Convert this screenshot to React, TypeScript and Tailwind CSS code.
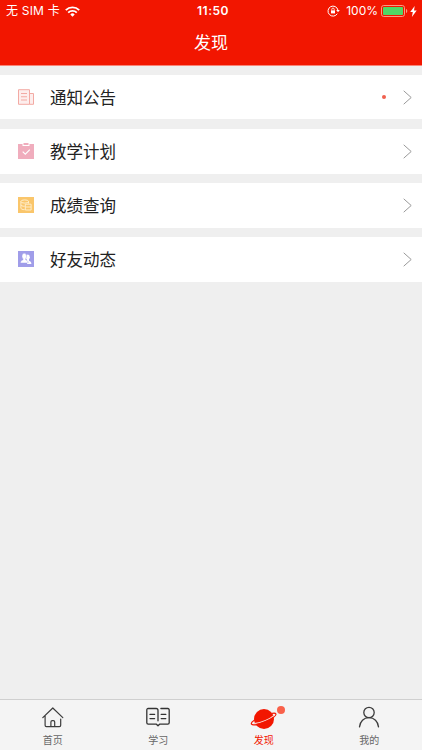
import type { ReactNode } from "react";

const rows: { label: string; icon: ReactNode; unread?: boolean }[] = [
  { label: "通知公告", icon: <NoticeIcon />, unread: true },
  { label: "教学计划", icon: <PlanIcon /> },
  { label: "成绩查询", icon: <ScoreIcon /> },
  { label: "好友动态", icon: <FriendsIcon /> },
];

const tabs: { label: string; icon: ReactNode; active?: boolean }[] = [
  { label: "首页", icon: <HomeIcon /> },
  { label: "学习", icon: <BookIcon /> },
  { label: "发现", icon: <PlanetIcon />, active: true },
  { label: "我的", icon: <UserIcon /> },
];

function NoticeIcon() {
  return (
    <svg width="16" height="16" viewBox="0 0 16 16" fill="none" stroke="#f3aaa4">
      <path d="M.5.7h11v14.6H.5zM11.5 4.5h4v10.8h-4" fill="#fdeeed" />
      <path d="M3 4.5h6M3 7.7h6M3 11h6" strokeWidth="1.1" />
    </svg>
  );
}

function PlanIcon() {
  return (
    <svg width="16" height="16" viewBox="0 0 16 16">
      <path d="M0 1h4.5v2h7V1H16v15H0z" fill="#f0adbd" />
      <path d="M5.5 0h5v2h-5z" fill="#f0adbd" />
      <path d="m4.7 8.6 2.6 2.6 4.5-4.5" fill="none" stroke="#fff" strokeWidth="1.2" />
    </svg>
  );
}

function ScoreIcon() {
  return (
    <svg width="16" height="16" viewBox="0 0 16 16" fill="none" stroke="#fff0d2" strokeWidth=".9">
      <path d="M0 0h16v16H0z" fill="#fac66b" stroke="none" />
      <ellipse cx="6.7" cy="4.5" rx="3.8" ry="1.6" />
      <path d="M2.9 4.5v6.600c0 .9 1.500 1.500 3.700 1.600M2.900 7.800c0 .8 1.500 1.500 3.800 1.500M10.500 4.500v2" />
      <path d="M7.300 7.200h5.800v5.800H7.300zM7.300 10h5.800" />
    </svg>
  );
}

function FriendsIcon() {
  return (
    <svg width="16" height="16" viewBox="0 0 16 16">
      <path d="M0 0h16v16H0z" fill="#a09de9" />
      <g fill="#fff">
        <ellipse cx="9.8" cy="6.2" rx="2" ry="2.7" />
        <path d="M8.800 7.800H11v1.900c1.400.6 2.400 1.200 2.400 3.300H9z" />
        <g stroke="#a09de9" strokeWidth=".4">
          <path d="M5.200 7.200h2.300v1.500c1.700.8 2.700 1.400 2.700 3.200H2.500c0-2 1.200-2.600 2.700-3.200z" />
          <ellipse cx="6.300" cy="5.200" rx="2.300" ry="2.900" />
        </g>
        <path d="M5.500 7h1.700v2.500H5.500z" />
      </g>
    </svg>
  );
}

function HomeIcon() {
  return (
    <svg width="24" height="24" viewBox="0 0 24 24" fill="none" stroke="#3c3c3c" strokeWidth="1.2" strokeLinecap="round" strokeLinejoin="round">
      <path d="m1.8 11.6 10-9.6 10 9.6M4.1 9.8v9.5q0 1.3 1.3 1.3h13q1.3 0 1.3-1.3V13" />
      <path d="M9.9 20.5V16q0-1.4 1.4-1.4h1q1.4 0 1.4 1.4v4.5" />
    </svg>
  );
}

function BookIcon() {
  return (
    <svg width="24" height="24" viewBox="0 0 24 24" fill="none" stroke="#333" strokeWidth="1.3" strokeLinecap="round" strokeLinejoin="round">
      <path d="M12 14.8V4.4q0-1.9-1.9-1.9H2.2Q.8 2.5.8 3.9v12.9q0 1.4 1.4 1.4h8.2l1.6 1.6 1.6-1.6h8.2q1.4 0 1.4-1.4V3.9q0-1.4-1.4-1.4h-6.900" />
      <path d="M4 8.400h4.600M4 12.600h4.600M15.200 8.400h4.600M15.200 12.600h4.600" />
    </svg>
  );
}

function PlanetIcon() {
  return (
    <svg width="28" height="24" viewBox="0 0 28 24" fill="none" strokeLinecap="round">
      <circle cx="14" cy="13" r="10" fill="#f21600" />
      <path d="M4.300 17.600c3.200-.3 7.200-1.300 11.200-3 3.600-1.600 6.400-3.300 8-4.700" stroke="#fbd5d0" strokeWidth="1.200" />
      <path
        d="M4.300 14.300C2 15.700.9 17.200 1.500 18.200c1.100 1.500 7.300.2 13.800-2.600C21.900 12.700 26.500 9.500 25.900 8c-.4-.9-1.700-1-3.600-.6"
        stroke="#f21600"
        strokeWidth="1.200"
      />
    </svg>
  );
}

function UserIcon() {
  return (
    <svg width="24" height="24" viewBox="0 0 24 24" fill="none" stroke="#3c3c3c" strokeWidth="1.3" strokeLinecap="round">
      <circle cx="12" cy="6.5" r="5.2" />
      <path d="M2.5 20.9c.5-5.5 4.300-9.200 9.500-9.200s9 3.700 9.500 9.200" />
    </svg>
  );
}

function StatusBar() {
  return (
    <div className="grid h-[22px] grid-cols-[1fr_auto_1fr] items-center text-[12px] leading-none">
      <div className="flex items-center pl-[6px]">
        <span className="whitespace-nowrap tracking-[0.2px]">无 SIM 卡</span>
        <svg className="ml-[5px]" width="15" height="11" viewBox="0 0 15 11" fill="none" stroke="#fff" strokeWidth="1.9">
          <path d="M.8 4.1a9.600 9.600 0 0 1 13.400 0M3.200 6.600a6.200 6.200 0 0 1 8.600 0" />
          <path d="m7.500 10.700-2.200-2.300a3.200 3.200 0 0 1 4.400 0z" fill="#fff" stroke="none" />
        </svg>
      </div>
      <span className="pl-[4px] text-[12px] font-semibold tracking-[0.5px]">11:50</span>
      <div className="flex items-center justify-end pr-[5px]">
        <svg width="13" height="12" viewBox="0 0 13 12" fill="none" stroke="#fff">
          <path d="M10.3 8.7A5 5 0 1 1 10.9 5" />
          <path d="M9.2 5h3.600L11 7.300z" fill="#fff" stroke="none" />
          <path d="M4 5.400h4v3H4z" fill="#fff" stroke="none" />
          <path d="M4.800 5.600V4.300a1.200 1.200 0 0 1 2.400 0v1.300" strokeWidth=".8" />
        </svg>
        <span className="ml-[6px]">100%</span>
        <svg className="ml-[3px]" width="27" height="12" viewBox="0 0 27 12">
          <rect x=".5" y=".5" width="23" height="11" rx="2.2" fill="none" stroke="#fa9a83" />
          <rect x="2" y="2" width="20" height="8" rx=".8" fill="#4fd765" />
          <path d="M25 4c1.700.5 1.700 3.500 0 4z" fill="#fa9a83" />
        </svg>
        <svg className="ml-[2px]" width="7" height="11" viewBox="0 0 7 11">
          <path d="M4.700 0 .2 6.100h2.600L1.900 11 6.700 4.500H4z" fill="#fff" />
        </svg>
      </div>
    </div>
  );
}

export default function App() {
  return (
    <div className="flex h-[750px] w-full flex-col bg-[#efefef] font-['Inter','Noto_Sans_CJK_SC',sans-serif]">
      <header className="h-[66px] shrink-0 border-b border-[#f98477] bg-[#f21600] text-white">
        <StatusBar />
        <h1 className="pt-[9px] text-center text-[17px] leading-6">发现</h1>
      </header>

      <main className="flex flex-1 flex-col gap-[9px] pt-[9px]">
        {rows.map((row) => (
          <div key={row.label} className="flex h-[45px] items-center bg-white pb-px pl-[18px] pr-[10px] first:mb-px first:h-11 first:pb-0">
            {row.icon}
            <span className="ml-4 pt-[2px] text-[16.5px] leading-6 text-[#222]">{row.label}</span>
            <div className="ml-auto flex items-center">
              {row.unread && <span className="mr-[17px] size-1 rounded-full bg-[#f0604f]" />}
              <svg width="9" height="15" viewBox="0 0 9 15" fill="none" stroke="#999">
                <path d="m.7.8 7.500 6.700-7.500 6.700" />
              </svg>
            </div>
          </div>
        ))}
      </main>

      <nav className="grid h-[51px] shrink-0 grid-cols-4 border-t border-[#cfcfcf] bg-[#f4f4f4]">
        {tabs.map((tab) => (
          <div key={tab.label} className="flex flex-col items-center pt-[6px]">
            <div className="relative">
              {tab.icon}
              {tab.active && (
                <span className="absolute -right-[7px] top-0 size-2 rounded-full bg-[#f9614a]" />
              )}
            </div>
            <span className={`mt-[3px] text-[10px] leading-[14px] ${tab.active ? "text-[#f21600]" : "text-[#666]"}`}>
              {tab.label}
            </span>
          </div>
        ))}
      </nav>
    </div>
  );
}
